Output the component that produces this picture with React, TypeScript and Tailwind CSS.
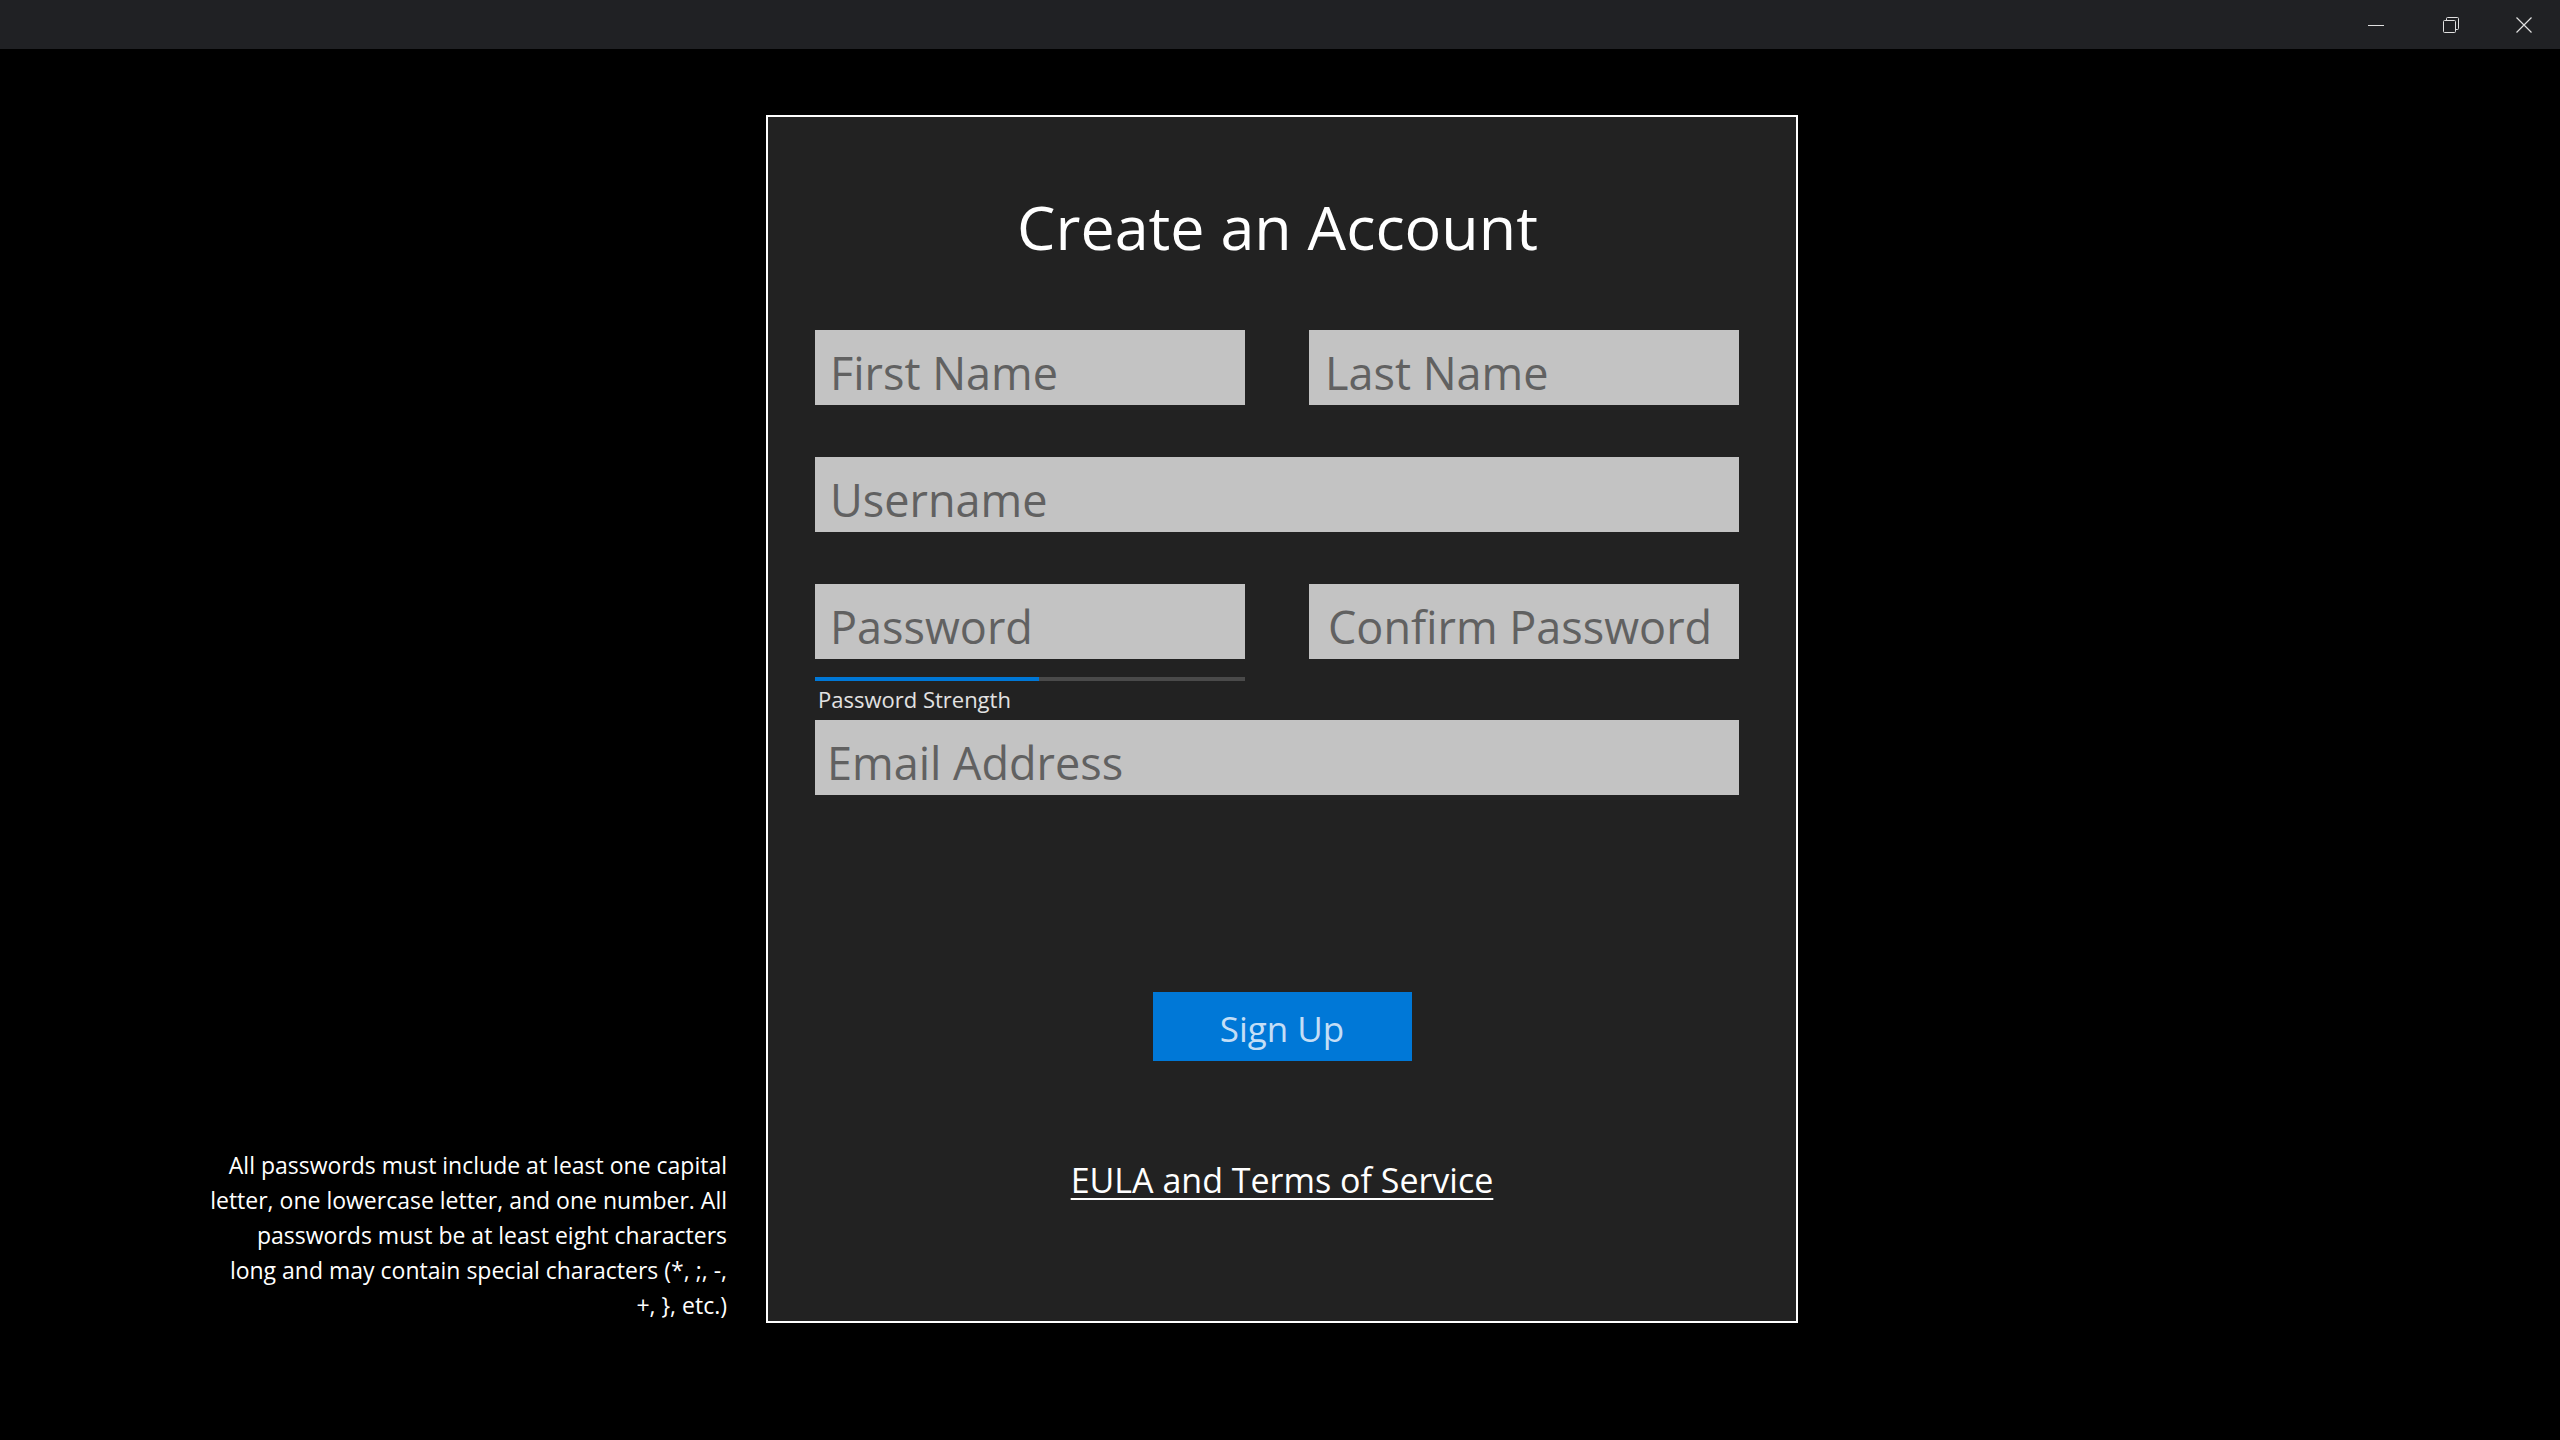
import { useState } from "react";

const font = { fontFamily: '"Open Sans", "Noto Sans", sans-serif' };

function Field({
  placeholder,
  wide = false,
  pad = "pl-[15px]",
  type = "text",
}: {
  placeholder: string;
  wide?: boolean;
  pad?: string;
  type?: string;
}) {
  return (
    <input
      type={type}
      placeholder={placeholder}
      className={`h-[75px] ${wide ? "w-full" : "w-[430px]"} bg-[#c3c3c3] ${pad} pt-[9px] text-[45px] text-[#1a1a1a] placeholder:text-[#616161] outline-none`}
      style={font}
    />
  );
}

export default function App() {
  const [strength] = useState(52);

  return (
    <div className="flex min-h-screen w-full flex-col bg-black" style={font}>
      {/* title bar */}
      <div className="flex h-[49px] w-full items-stretch justify-end bg-[#202124]">
        <button className="flex w-[73px] items-center justify-center pr-[4px]">
          <svg width="16" height="16" viewBox="0 0 16 16">
            <path d="M0 8.5 H16" stroke="#e0e0e0" strokeWidth="1" />
          </svg>
        </button>
        <button className="flex w-[73px] items-center justify-center">
          <svg width="16" height="16" viewBox="0 0 16 16" fill="none" stroke="#e0e0e0" strokeWidth="1">
            <rect x="0.5" y="3.5" width="12" height="12" rx="1" />
            <path d="M3.5 3.5 V1.5 a1 1 0 0 1 1 -1 H14.5 a1 1 0 0 1 1 1 V11.5 a1 1 0 0 1 -1 1 H12.5" />
          </svg>
        </button>
        <button className="flex w-[73px] items-center justify-center">
          <svg width="16" height="16" viewBox="0 0 16 16" fill="none" stroke="#e0e0e0" strokeWidth="1.2">
            <path d="M0.5 0.5 L15.5 15.5 M15.5 0.5 L0.5 15.5" />
          </svg>
        </button>
      </div>

      {/* main */}
      <div className="mt-[66px] flex w-full items-end">
        <div className="flex flex-1 justify-end">
          <p className="mr-[35px] whitespace-nowrap text-right text-[23px] leading-[35px] text-white">
            All passwords must include at least one capital
            <br />
            letter, one lowercase letter, and one number. All
            <br />
            passwords must be at least eight characters
            <br />
            long and may contain special characters (*, ;, -,
            <br />
            {"+, }, etc.)"}
          </p>
        </div>

        <div className="ml-[4px] flex h-[1208px] w-[1032px] flex-col border-2 border-white bg-[#222222]">
          <h1 className="mt-[79px] pr-[9px] text-center text-[61px] leading-[61px] font-normal text-white">
            Create an Account
          </h1>

          <div className="ml-[47px] flex w-[924px] flex-col">
            <div className="mt-[73px] flex justify-between">
              <Field placeholder="First Name" />
              <Field placeholder="Last Name" pad="pl-[16px]" />
            </div>

            <div className="mt-[52px]">
              <Field placeholder="Username" wide />
            </div>

            <div className="mt-[52px] flex justify-between">
              <Field placeholder="Password" type="password" />
              <Field placeholder="Confirm Password" type="password" pad="pl-[19px]" />
            </div>

            <div className="mt-[18px] h-[4px] w-[430px] bg-[#4a4a4a]">
              <div className="h-full bg-[#0078d7]" style={{ width: `${strength}%` }} />
            </div>
            <div className="mt-[7px] h-[22px] pl-[3px] text-[22px] leading-[22px] text-[#e2e2e2]">
              Password Strength
            </div>

            <div className="mt-[10px]">
              <Field placeholder="Email Address" wide pad="pl-[12px]" />
            </div>
          </div>

          <button className="mx-auto mt-[197px] flex h-[69px] w-[259px] items-center justify-center bg-[#0078d7] pt-[5px] text-[35px] text-[#c4def6]">
            Sign Up
          </button>

          <a
            href="#"
            className="mx-auto mt-[102px] h-[34px] text-[34px] leading-[34px] text-white underline decoration-[2px] underline-offset-[5px]"
          >
            EULA and Terms of Service
          </a>
        </div>

        <div className="flex-1" />
      </div>
    </div>
  );
}
